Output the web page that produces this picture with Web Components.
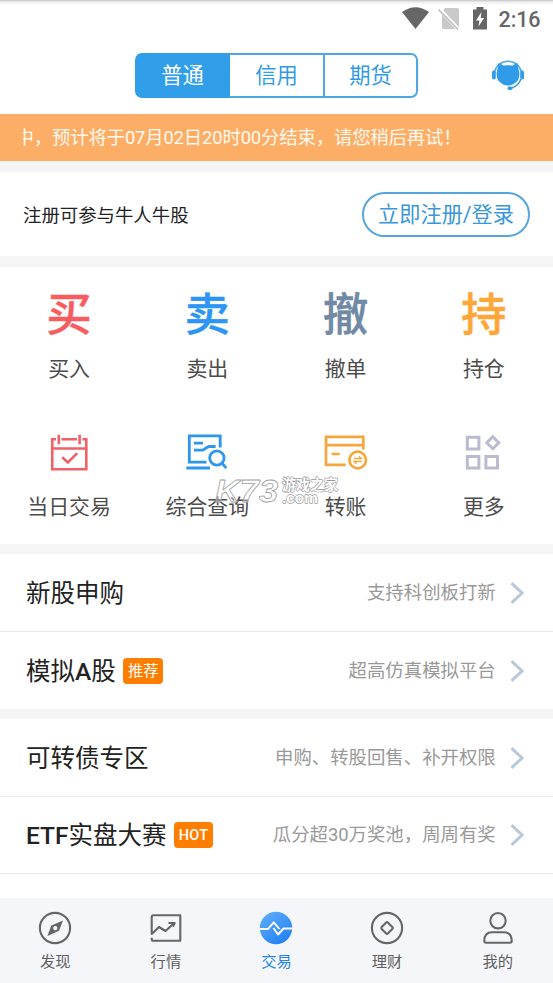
<!DOCTYPE html>
<html lang="zh-CN">
<head>
<meta charset="utf-8">
<title>交易</title>
<style>
html,body{margin:0;padding:0}
body{width:553px;height:983px;overflow:hidden;background:#fff;font-family:Roboto,"Noto Sans CJK SC",sans-serif}
</style>
</head>
<body>
<trade-app></trade-app>
<script>
function define(name, html, setup) {
  const tpl = document.createElement('template');
  tpl.innerHTML = html;
  customElements.define(name, class extends HTMLElement {
    constructor() {
      super();
      this.attachShadow({ mode: 'open' }).appendChild(tpl.content.cloneNode(true));
    }
    connectedCallback() { if (setup) setup(this, this.shadowRoot); }
  });
}

define('status-bar', `
<style>
:host{display:flex;justify-content:flex-end;height:38px;box-sizing:border-box;padding:6px 12.500px 0 0;background:linear-gradient(#c4c4c4,#eee 2px,#fff 5px);color:#666}
svg{display:block}
span{font:500 21.500px/27px Roboto,sans-serif;letter-spacing:-.1px;margin-left:11px}
</style>
<svg width="90" height="26" viewBox="0 0 90 26">
 <path d="M4 6Q17.500-3.500 31 6L17.500 23Z" fill="#666"/>
 <path d="M47 2H59Q61 2 61 4V21Q61 23 59 23H46Q44 23 44 21V6Z" fill="#c9c9c9"/>
 <path d="M41 2.500L60.500 23.500" stroke="#fff" stroke-width="4"/>
 <path d="M40.500 3.500L60 23.500" stroke="#bbb" stroke-width="1.600"/>
 <path d="M75 3.500H78.500V1H85.500V3.500H89V23.500H75Z" fill="#666"/>
 <path d="M83.500 6L78 14.500H81.300L80.500 20.500L86 12H82.700Z" fill="#fff"/>
</svg>
<span>2:16</span>`);

define('account-tabs', `
<style>
:host{display:grid;grid-template-columns:95px 93px 95px;width:283px;height:45px;box-sizing:border-box}
::slotted(*){display:block;box-sizing:border-box;height:45px;border:2px solid #4fa8e6;font-size:21.300px;line-height:42px;text-align:center;color:#309be8}
::slotted(:nth-child(1)){background:#309ee9;border-color:#309ee9;color:#fff;border-radius:7px 0 0 7px}
::slotted(:nth-child(2)){border-left:0;border-right:0}
::slotted(:nth-child(3)){border-radius:0 7px 7px 0}
</style><slot></slot>`);

define('app-header', `
<style>
:host{display:grid;grid-template-columns:1fr 283px 1fr;height:76px;box-sizing:border-box;padding-top:15px}
svg{display:block;justify-self:end;margin:5px 28px 0 0}
</style>
<i></i><account-tabs><span>普通</span><span>信用</span><span>期货</span></account-tabs>
<svg width="34" height="34" viewBox="0 0 34 34">
 <path d="M3.500 14A13.800 13.500 0 0 1 30.500 14" fill="none" stroke="#55acea" stroke-width="1.600"/>
 <path d="M30 21Q27 29 19 30.200" fill="none" stroke="#309be8" stroke-width="1.500"/>
 <rect x="1" y="12.500" width="3.800" height="9" rx="1.800" fill="#309be8"/>
 <rect x="29.200" y="12.500" width="3.800" height="9" rx="1.800" fill="#309be8"/>
 <rect x="16.500" y="28.500" width="5" height="3.400" rx="1.700" fill="#309be8"/>
 <path d="M7.800 4.800L12.500 7.600Q17 6.800 21.500 7.600L26.200 4.800L27.500 11Q29.500 17 27.200 22Q22.500 27.500 17 27.500Q11.500 27.500 6.800 22Q4.500 17 6.500 11Z" fill="#309be8"/>
</svg>`);

define('notice-bar', `
<style>
:host{display:block;height:47px;padding:0 23px;background:#fdae66;color:#fff9ef}
div{overflow:hidden;white-space:nowrap;font-size:18.400px;line-height:47px}
span{display:block;margin-left:-7.500px;letter-spacing:-.16px}
</style><div><span><slot></slot></span></div>`);

define('section-gap', `<style>:host{display:block;height:var(--h,10px);background:#f5f5f5}</style>`);

define('register-row', `
<style>
:host{display:flex;align-items:center;justify-content:space-between;height:84px;padding:0 23px;font-size:18.400px;color:#222}
button{font:inherit;font-size:21.200px;color:#3a97d9;background:#fff;border:2px solid #55a5de;border-radius:23px;height:45px;width:168px;padding:1px 0 0;line-height:40px;white-space:nowrap}
</style><span><slot></slot></span><button>立即注册/登录</button>`);

define('quick-item', `
<style>
:host{display:flex;flex-direction:column;align-items:center;box-sizing:border-box;height:138.500px;padding-top:24px}
.i{height:46px;font-size:45.500px;line-height:40px;font-weight:500;font-family:"Noto Sans CJK SC",sans-serif;-webkit-text-stroke:.4px currentColor}
.l{margin-top:17.500px;font-size:20.900px;line-height:28px;color:#4c4c4c}
</style><div class="i"><slot name="icon"></slot></div><div class="l"><slot></slot></div>`);

define('quick-grid', `
<style>
:host{display:grid;grid-template-columns:repeat(4,1fr);position:relative}
svg{display:block;fill:none}
</style>
<quick-item><span slot="icon" style="color:#f75c60">买</span>买入</quick-item>
<quick-item><span slot="icon" style="color:#2c95f5">卖</span>卖出</quick-item>
<quick-item><span slot="icon" style="color:#7089a5">撤</span>撤单</quick-item>
<quick-item><span slot="icon" style="color:#fca738">持</span>持仓</quick-item>
<quick-item><svg slot="icon" width="46" height="46" stroke="#f06066" stroke-width="2.600">
 <path d="M10 9.300H6.200V39.200H40.300V9.300H36.500M15.500 9.300H31M6 18.500H40M12.800 4.800V14.200M33.600 4.800V14.200M16.200 27.200L21.900 32.500L31.200 23.200"/></svg>当日交易</quick-item>
<quick-item><svg slot="icon" width="46" height="46" stroke="#2c95ee" stroke-width="2.800">
 <path d="M36.200 17.500V5.800H5.300V32.100H22.500M2.300 38H26M10 13.200H19M10 20.200H17.500C21 20.200 22 16.500 25.500 16.500H31.600"/>
 <circle cx="32.900" cy="28" r="7.200"/><path d="M38 33.300L42.300 38.100"/></svg>综合查询</quick-item>
<quick-item><svg slot="icon" width="46" height="46" stroke="#f5a63d" stroke-width="2.700">
 <path d="M40.300 19.500V6.900H3V34.800H22.700M3 15.200H40M8.700 24H16.700"/>
 <circle cx="34.700" cy="30" r="8.300"/><path stroke-width="1.300" d="M30.700 28.500H38.500L36 26.200M38.700 31.500H30.900L33.400 33.800"/></svg>转账</quick-item>
<quick-item><svg slot="icon" width="46" height="46" stroke="#babbd0" stroke-width="3">
 <path d="M6.300 7.300H17.900V18.900H6.300ZM6.300 26.400H17.900V38H6.300ZM24.900 26.400H36.500V38H24.900ZM31.800 6.700L37.800 12.700L31.800 18.700L25.800 12.700Z"/></svg>更多</quick-item>
<site-mark></site-mark>`);

define('site-mark', `
<style>
:host{position:absolute;left:215px;top:209px;display:flex;gap:3px;white-space:nowrap}
text{stroke-linejoin:round}
.k text{font:italic 700 31px "Liberation Sans",sans-serif;fill:rgba(255,255,255,.4);stroke:#a2a2a2;stroke-width:.8}
.n text{font-weight:700;fill:#fff;stroke:#999;stroke-width:1.300;paint-order:stroke}
svg{display:block;overflow:visible}
</style>
<svg class="k" width="64" height="30"><text x="0" y="26" textLength="63" lengthAdjust="spacingAndGlyphs">K73</text></svg>
<svg class="n" width="58" height="30"><text x="0" y="14" font-size="14.500" font-family="Noto Sans CJK SC" textLength="56" lengthAdjust="spacingAndGlyphs">游戏之家</text><text x="0" y="27" font-size="15.500" font-family="Liberation Sans" textLength="36" lengthAdjust="spacingAndGlyphs">.com</text></svg>`);

define('list-row', `
<style>
:host{display:flex;align-items:center;height:77px;padding:0 29px 0 26px;color:#222}
:host([line]){border-bottom:1px solid #e9e9e9}
:host([last]){height:76px}
.t{font-size:24.500px;line-height:34px;padding-top:2px}
::slotted(b){font-weight:500}
.b{margin-left:7.500px;padding:0 4.700px;border-radius:4px;background:#ff7e00;color:#fff;font-size:15.200px;line-height:26px;height:26px}
.b:empty{display:none}
.b.hot{font-size:14.500px;font-weight:500;padding:0 4.700px;letter-spacing:.3px;line-height:27px}
.d{margin-left:auto;font-size:18.400px;line-height:26px;color:#999}
svg{margin-left:14.300px;flex:none}
</style><span class="t"><slot></slot></span><span class="b"></span><span class="d"></span>
<svg width="14" height="22" fill="none" stroke="#b9c9d8" stroke-width="3"><path d="M1.500 1.200L12 11L1.500 20.800"/></svg>`,
(el, r) => {
  const b = r.querySelector('.b');
  b.textContent = el.getAttribute('badge') || '';
  b.classList.toggle('hot', b.textContent === 'HOT');
  r.querySelector('.d').textContent = el.getAttribute('note');
});

define('nav-item', `
<style>
:host{display:flex;flex-direction:column;align-items:center;padding-top:12px;color:#606060;font-size:15.300px;line-height:22px}
:host([active]){color:#2186e8}
div{height:36px;margin-bottom:5px}
</style><div><slot name="icon"></slot></div><span><slot></slot></span>`);

define('tab-bar', `
<style>
:host{display:grid;grid-template-columns:repeat(5,1fr);height:85px;background:#f5f6fa}
svg{display:block;fill:none;stroke:#666;stroke-width:2.100;stroke-linejoin:round}
</style>
<nav-item><svg slot="icon" width="36" height="36"><circle cx="18" cy="18" r="15.100"/>
 <path fill="#666" stroke="none" fill-rule="evenodd" d="M26 10.400L22 20.800L10.400 26L14.300 15.400ZM18.200 16A2.100 2.100 0 1 0 18.300 16Z"/></svg>发现</nav-item>
<nav-item><svg slot="icon" width="36" height="36"><path d="M3.700 27.700V29.200Q3.700 30.700 5.200 30.700H32.300V5.300H5.200Q3.700 5.300 3.700 6.800V24L11 17L17.500 21L26 13.300M20.500 13H26.700L25 16.500"/></svg>行情</nav-item>
<nav-item active><svg slot="icon" width="36" height="36"><defs><linearGradient id="g" x2=".7" y2="1"><stop stop-color="#62b0fa"/><stop offset="1" stop-color="#2582f5"/></linearGradient></defs>
 <circle cx="18" cy="18" r="16.200" fill="url(#g)" stroke="none"/><path stroke="#fff" stroke-width="1.900" d="M1.500 19H10L15.700 12.300L21.500 19M15.500 18L20 24.500L25.500 18.500H34.500"/></svg>交易</nav-item>
<nav-item><svg slot="icon" width="36" height="36"><circle cx="18" cy="18" r="15.100"/><rect x="13.500" y="13.500" width="9" height="9" rx="1.500" transform="rotate(45 18 18)"/></svg>理财</nav-item>
<nav-item><svg slot="icon" width="36" height="36"><circle cx="18" cy="10.700" r="7.700"/><path d="M4.300 31Q4.300 22.300 12 22.300H24Q31.700 22.300 31.700 31Q31.700 32.700 30 32.700H6Q4.300 32.700 4.300 31Z"/></svg>我的</nav-item>`);

define('trade-app', `
<style>:host{display:flex;flex-direction:column;width:553px;height:983px;background:#fff}
tab-bar{margin-top:auto}</style>
<status-bar></status-bar>
<app-header></app-header>
<notice-bar>中，预计将于07月02日20时00分结束，请您稍后再试！</notice-bar>
<section-gap style="--h:11px"></section-gap>
<register-row>注册可参与牛人牛股</register-row>
<section-gap style="--h:11px"></section-gap>
<quick-grid></quick-grid>
<section-gap></section-gap>
<list-row line note="支持科创板打新">新股申购</list-row>
<list-row badge="推荐" note="超高仿真模拟平台">模拟<b>A</b>股</list-row>
<section-gap></section-gap>
<list-row line note="申购、转股回售、补开权限">可转债专区</list-row>
<list-row line last badge="HOT" note="瓜分超30万奖池，周周有奖"><b>ETF</b>实盘大赛</list-row>
<tab-bar></tab-bar>`);
</script>
</body>
</html>
